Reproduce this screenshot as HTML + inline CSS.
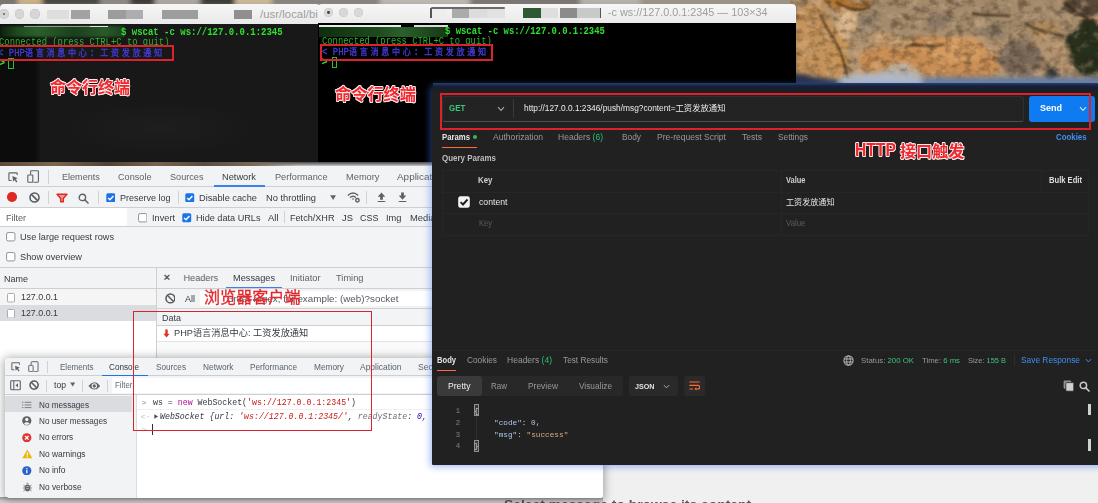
<!DOCTYPE html>
<html lang="zh"><head><meta charset="utf-8"><title>WebSocket push demo</title>
<style>
html,body{margin:0;padding:0;background:#a88a68;}
#p{position:relative;width:1098px;height:503px;overflow:hidden;background:#a88a68;}
#p>div,#p>span,#p>svg{position:absolute;}
.t{white-space:pre;transform-origin:0 50%;display:block;}
</style></head>
<body><div id="p">
<svg style="left:0;top:0" width="1098" height="503" viewBox="0 0 1098 503">
<defs>
<filter id="rk" x="-5%" y="-20%" width="110%" height="140%" color-interpolation-filters="sRGB">
<feGaussianBlur stdDeviation="2.2" result="b"/>
<feTurbulence type="fractalNoise" baseFrequency="0.045 0.06" numOctaves="3" seed="11" result="n"/>
<feDisplacementMap in="b" in2="n" scale="16" xChannelSelector="R" yChannelSelector="G"/>
</filter>
<filter id="bs" x="-10%" y="-10%" width="120%" height="120%"><feGaussianBlur stdDeviation=".9"/></filter>
<filter id="bt" x="-10%" y="-60%" width="120%" height="220%"><feGaussianBlur stdDeviation="2.4"/></filter>
<filter id="nzd" x="0" y="0" width="100%" height="100%" color-interpolation-filters="sRGB"><feTurbulence type="fractalNoise" baseFrequency="0.11 0.14" numOctaves="4" seed="3"/><feColorMatrix type="matrix" values="0 0 0 0 0.16  0 0 0 0 0.1  0 0 0 0 0.05  1.9 1.6 0 0 -1.55"/></filter>
<filter id="nzl" x="0" y="0" width="100%" height="100%" color-interpolation-filters="sRGB"><feTurbulence type="fractalNoise" baseFrequency="0.08 0.1" numOctaves="3" seed="21"/><feColorMatrix type="matrix" values="0 0 0 0 0.95  0 0 0 0 0.82  0 0 0 0 0.66  0 1.8 1.6 0 -1.75"/></filter>
<clipPath id="wc"><rect x="790" y="0" width="308" height="92"/></clipPath>
</defs>
<rect width="1098" height="170" fill="#ae8f6c"/>
<g filter="url(#bt)">
<rect x="-10" y="-6" width="30" height="12" fill="#77736e"/>
<rect x="18" y="-6" width="25" height="12" fill="#c9b08a"/>
<rect x="42" y="-6" width="60" height="12" fill="#474645"/>
<rect x="100" y="-6" width="32" height="12" fill="#8a8886"/>
<rect x="130" y="-6" width="26" height="12" fill="#3c3b3a"/>
<rect x="155" y="-6" width="48" height="12" fill="#a8a6a3"/>
<rect x="200" y="-6" width="36" height="12" fill="#3b3a39"/>
<rect x="235" y="-6" width="38" height="12" fill="#c8b89a"/>
<rect x="272" y="-6" width="110" height="12" fill="#858380"/>
<rect x="380" y="-6" width="92" height="12" fill="#b9b7b4"/>
<rect x="470" y="-6" width="112" height="12" fill="#787673"/>
<rect x="580" y="-6" width="62" height="12" fill="#b4b2ae"/>
<rect x="640" y="-6" width="160" height="12" fill="#9a9389"/>
</g>
<g clip-path="url(#wc)">
<g filter="url(#rk)">
<rect x="780" y="-10" width="330" height="110" fill="#b49470"/>
<rect x="856" y="-10" width="220" height="48" fill="#a48b6c"/>
<ellipse cx="812" cy="44" rx="22" ry="44" fill="#c4935c"/>
<ellipse cx="846" cy="3" rx="22" ry="7" fill="#b27430"/>
<ellipse cx="846" cy="24" rx="9" ry="20" fill="#dbb68d" transform="rotate(16 846 24)"/>
<ellipse cx="838" cy="58" rx="10" ry="22" fill="#c89557"/>
<ellipse cx="930" cy="62" rx="72" ry="24" fill="#c98e55"/>
<ellipse cx="955" cy="52" rx="30" ry="12" fill="#d39a5f"/>
<ellipse cx="893" cy="40" rx="22" ry="6" fill="#caa070"/>
<ellipse cx="870" cy="22" rx="10" ry="8" fill="#8f7d68"/>
<ellipse cx="940" cy="20" rx="14" ry="9" fill="#8a7763"/>
<ellipse cx="990" cy="30" rx="16" ry="8" fill="#8c7963"/>
<ellipse cx="1021" cy="58" rx="21" ry="19" fill="#7b6a5a"/>
<ellipse cx="1044" cy="30" rx="14" ry="8" fill="#b08a5c"/>
<ellipse cx="1052" cy="72" rx="7" ry="9" fill="#33312f"/>
<ellipse cx="1090" cy="50" rx="22" ry="29" fill="#27301d"/>
<ellipse cx="1085" cy="6" rx="20" ry="11" fill="#57483a"/>
<ellipse cx="900" cy="74" rx="20" ry="9" fill="#b9ad9f"/>
</g>
<g filter="url(#bs)" fill="none" stroke="#33220f" stroke-width="1.9" opacity=".9">
<path d="M820 14 C826 30 838 42 842 56 S846 70 848 80"/>
<path d="M836 2 C846 9 858 12 870 7"/>
<path d="M972 13 C985 17 998 14 1010 16"/>
<path d="M1025 24 C1040 31 1052 34 1064 36"/>
<path d="M905 47 C918 41 932 50 944 44"/>
<path d="M1064 2 C1074 12 1084 18 1096 22"/>
</g>
<rect x="790" y="0" width="308" height="92" filter="url(#nzd)" opacity=".38"/>
<rect x="790" y="0" width="308" height="92" filter="url(#nzl)" opacity=".4"/>
<g filter="url(#bt)">
<path d="M780 70 L800 74 L842 82 L842 95 L780 95Z" fill="#27324d"/>
<ellipse cx="884" cy="81" rx="46" ry="8" fill="#b1b9c6"/>
<rect x="922" y="77" width="190" height="16" fill="#6d809d"/>
</g>
</g>
<rect x="0" y="158" width="330" height="10" fill="#7a6a58"/>
</svg>
<div style="left:0px;top:4px;width:320px;height:20.5px;background:linear-gradient(#f6f6f6,#e9e9e9);border-radius:4px 4px 0 0;"></div>
<div style="left:0px;top:24px;width:320px;height:137.5px;background:#181818;"></div>
<div style="left:0px;top:24px;width:41px;height:137.5px;background:linear-gradient(90deg,#0c0c0c 85%,#181818);"></div>
<div style="left:60px;top:100px;width:200px;height:56px;background:radial-gradient(closest-side,#1e1e1e,#181818);"></div>
<div style="left:-0.7000000000000002px;top:9.3px;width:9.4px;height:9.4px;background:#d6d6d6;border-radius:50%;box-shadow:inset 0 0 0 .5px #c6c6c6;"></div>
<div style="left:14.8px;top:9.3px;width:9.4px;height:9.4px;background:#d6d6d6;border-radius:50%;box-shadow:inset 0 0 0 .5px #c6c6c6;"></div>
<div style="left:30.3px;top:9.3px;width:9.4px;height:9.4px;background:#d6d6d6;border-radius:50%;box-shadow:inset 0 0 0 .5px #c6c6c6;"></div>
<div style="left:2.6px;top:12.6px;width:2.8px;height:2.8px;background:#5f5f5f;border-radius:50%;"></div>
<div style="left:47px;top:9.5px;width:22px;height:9.5px;background:#dedede;filter:blur(.5px);"></div>
<div style="left:71px;top:9.5px;width:19px;height:9.5px;background:#a2a2a2;filter:blur(.5px);"></div>
<div style="left:108px;top:9.5px;width:18px;height:9.5px;background:#9c9c9c;filter:blur(.5px);"></div>
<div style="left:126px;top:9.5px;width:17px;height:9.5px;background:#adadad;filter:blur(.5px);"></div>
<div style="left:162px;top:9.5px;width:36px;height:9.5px;background:#9d9d9d;filter:blur(.5px);"></div>
<div style="left:234px;top:9.5px;width:18px;height:9.5px;background:#8f8f8f;filter:blur(.5px);"></div>
<span class="t" id="t1" style="left:260px;top:7px;font-size:11.2px;line-height:14.6px;color:#9d9d9d;font-family:'Liberation Sans','Noto Sans CJK SC',sans-serif;letter-spacing:.1px;">/usr/local/bin</span>
<div style="left:0px;top:26.4px;width:124px;height:11px;background:linear-gradient(90deg,#0c1f0c,#1f4a1f 14%,#2b602b 30%,#1b401b 60%,#2a5a2a 85%,#1c401c);filter:blur(.8px);"></div>
<div style="left:24px;top:25.6px;width:66px;height:1.8px;background:#8f998f;filter:blur(.7px);"></div>
<div style="left:90px;top:25.6px;width:18px;height:1.8px;background:#e0e6e0;filter:blur(.7px);"></div>
<span class="t" id="t2" style="left:121.4px;top:26px;font-size:10px;line-height:13.0px;color:#2fe02f;font-family:'Liberation Mono','Noto Sans CJK SC',monospace;font-weight:700;transform:scaleX(0.8976);">$ wscat -c ws://127.0.0.1:2345</span>
<span class="t" id="t3" style="left:-1.5px;top:36px;font-size:10px;line-height:13.0px;color:#25b825;font-family:'Liberation Mono','Noto Sans CJK SC',monospace;transform:scaleX(0.8879);">Connected (press CTRL+C to quit)</span>
<span class="t" id="t4" style="left:-1.6px;top:47px;font-size:10px;line-height:13.0px;color:#443cd8;font-family:'Liberation Mono','Noto Sans CJK SC',monospace;-webkit-text-stroke:.3px #443cd8;transform:scaleX(0.8965);">&lt; PHP<span style="font-size:9px;letter-spacing:3px">语言消息中心</span>: <span style="font-size:9px;letter-spacing:3px">工资发放通知</span></span>
<span class="t" id="t5" style="left:-1px;top:57px;font-size:10px;line-height:13.0px;color:#2fe02f;font-family:'Liberation Mono','Noto Sans CJK SC',monospace;font-weight:700;">&gt;</span>
<div style="left:8.2px;top:58px;width:5.6px;height:11px;background:transparent;border:1.1px solid #27c227;box-sizing:border-box;"></div>
<div style="left:318px;top:4px;width:477.5px;height:19px;background:linear-gradient(#f7f7f7,#eaeaea);border-radius:4px 4px 0 0;"></div>
<div style="left:318px;top:22.8px;width:477.5px;height:150px;background:#000;"></div>
<div style="left:323.7px;top:7.8px;width:9.2px;height:9.2px;background:#d8d8d8;border-radius:50%;box-shadow:inset 0 0 0 .5px #c8c8c8;"></div>
<div style="left:338.79999999999995px;top:7.8px;width:9.2px;height:9.2px;background:#d8d8d8;border-radius:50%;box-shadow:inset 0 0 0 .5px #c8c8c8;"></div>
<div style="left:354.09999999999997px;top:7.8px;width:9.2px;height:9.2px;background:#d8d8d8;border-radius:50%;box-shadow:inset 0 0 0 .5px #c8c8c8;"></div>
<div style="left:326.9px;top:11px;width:2.8px;height:2.8px;background:#444;border-radius:50%;"></div>
<div style="left:431px;top:8px;width:16px;height:9.5px;background:#eeeeee;filter:blur(.5px);"></div>
<div style="left:452px;top:8px;width:17px;height:9.5px;background:#ababab;filter:blur(.5px);"></div>
<div style="left:469px;top:8px;width:18px;height:9.5px;background:#dcdcdc;filter:blur(.5px);"></div>
<div style="left:523px;top:8px;width:18px;height:9.5px;background:#2f5a31;filter:blur(.5px);"></div>
<div style="left:541px;top:8px;width:17px;height:9.5px;background:#dedede;filter:blur(.5px);"></div>
<div style="left:560px;top:8px;width:17px;height:9.5px;background:#8b8b8b;filter:blur(.5px);"></div>
<div style="left:577px;top:8px;width:23px;height:9.5px;background:#c9c9c9;filter:blur(.5px);"></div>
<div style="left:430px;top:8px;width:1.6px;height:9.5px;background:#555;filter:blur(.5px);"></div>
<div style="left:431px;top:7.4px;width:74px;height:1.3px;background:#6a6a6a;filter:blur(.5px);border-radius:2px;"></div>
<div style="left:487px;top:8.6px;width:18px;height:9px;background:#e2e2e2;filter:blur(.5px);"></div>
<div style="left:599.5px;top:8px;width:1.6px;height:9.5px;background:#555;filter:blur(.5px);"></div>
<span class="t" id="t6" style="left:607.5px;top:5px;font-size:10.8px;line-height:14.0px;color:#9d9d9d;font-family:'Liberation Sans','Noto Sans CJK SC',sans-serif;transform:scaleX(1.0008);">-c ws://127.0.0.1:2345 — 103×34</span>
<div style="left:319px;top:27px;width:129px;height:9.5px;background:linear-gradient(90deg,#0f2d0f,#1d4a1d 45%,#2c5f2c 64%,#153815);filter:blur(.7px);"></div>
<div style="left:319px;top:25.4px;width:82px;height:2px;background:#e8ece8;filter:blur(.5px);"></div>
<div style="left:414px;top:25.4px;width:34px;height:2px;background:#d8dcd8;filter:blur(.5px);"></div>
<span class="t" id="t7" style="left:445.2px;top:25px;font-size:10px;line-height:13.0px;color:#2fe02f;font-family:'Liberation Mono','Noto Sans CJK SC',monospace;font-weight:700;transform:scaleX(0.8876);">$ wscat -c ws://127.0.0.1:2345</span>
<span class="t" id="t8" style="left:321.7px;top:35px;font-size:10px;line-height:13.0px;color:#25b825;font-family:'Liberation Mono','Noto Sans CJK SC',monospace;transform:scaleX(0.8842);">Connected (press CTRL+C to quit)</span>
<span class="t" id="t9" style="left:321.5px;top:46px;font-size:10px;line-height:13.0px;color:#443cd8;font-family:'Liberation Mono','Noto Sans CJK SC',monospace;-webkit-text-stroke:.3px #443cd8;transform:scaleX(0.8965);">&lt; PHP<span style="font-size:9px;letter-spacing:3px">语言消息中心</span>: <span style="font-size:9px;letter-spacing:3px">工资发放通知</span></span>
<span class="t" id="t10" style="left:321.5px;top:56px;font-size:10px;line-height:13.0px;color:#2fe02f;font-family:'Liberation Mono','Noto Sans CJK SC',monospace;font-weight:700;">&gt;</span>
<div style="left:331.8px;top:56.6px;width:5.6px;height:11px;background:transparent;border:1.1px solid #27c227;box-sizing:border-box;"></div>
<div style="left:0px;top:161.5px;width:1098px;height:4.5px;background:linear-gradient(#4b4b4b,#8a8a8a 55%,#c9c9c9);"></div>
<div style="left:0px;top:161.5px;width:300px;height:4px;background:linear-gradient(90deg,#5e4a38,#7b6650 18%,#4f4236 36%,#77644f 52%,#5a4c3f 68%,#77685a 84%,rgba(110,105,100,0));"></div>
<div style="left:0px;top:165.5px;width:1098px;height:340px;background:#ffffff;"></div>
<div style="left:0px;top:165.5px;width:1098px;height:21.5px;background:#f1f3f4;border-bottom:1px solid #cdcfd3;box-sizing:border-box;"></div>
<div style="left:0px;top:187px;width:1098px;height:20.5px;background:#f1f3f4;border-bottom:1px solid #cdcfd3;box-sizing:border-box;"></div>
<div style="left:0px;top:207.5px;width:1098px;height:19px;background:#f1f3f4;border-bottom:1px solid #cdcfd3;box-sizing:border-box;"></div>
<div style="left:0px;top:226.5px;width:1098px;height:41.5px;background:#f3f4f5;border-bottom:1px solid #cdcfd3;box-sizing:border-box;"></div>
<svg style="left:7.5px;top:171.5px;" width="10.0" height="11.0" viewBox="0 0 10 11"><path d="M9.2 3V1.5Q9.2 .9 8.6 .9H1.5Q.9 .9 .9 1.5V7.9Q.9 8.5 1.5 8.5H3.6" fill="none" stroke="#5f6368" stroke-width="1.1"/><path d="M4.4 4L9.8 6.2L7.6 7.1L9.4 9.6L8.3 10.4L6.6 7.9L5.1 9.4Z" fill="#5f6368"/></svg>
<svg style="left:27px;top:170.2px;" width="12.0" height="13.0" viewBox="0 0 12 13"><path d="M3.6 4.4V1.4Q3.6 .8 4.2 .8H10.8Q11.4 .8 11.4 1.4V11.6Q11.4 12.2 10.8 12.2H6.4" fill="none" stroke="#5f6368" stroke-width="1.1"/><rect x=".8" y="5" width="5" height="7.2" rx=".7" fill="none" stroke="#5f6368" stroke-width="1.1"/></svg>
<div style="left:48px;top:170px;width:1px;height:13.5px;background:#d0d2d5;"></div>
<span class="t" id="t11" style="left:61.6px;top:172px;font-size:9.15px;line-height:11.9px;color:#5f6368;font-family:'Liberation Sans','Noto Sans CJK SC',sans-serif;transform:scaleX(0.9935);">Elements</span>
<span class="t" id="t12" style="left:117.5px;top:172px;font-size:9.15px;line-height:11.9px;color:#5f6368;font-family:'Liberation Sans','Noto Sans CJK SC',sans-serif;transform:scaleX(1.0005);">Console</span>
<span class="t" id="t13" style="left:169.5px;top:172px;font-size:9.15px;line-height:11.9px;color:#5f6368;font-family:'Liberation Sans','Noto Sans CJK SC',sans-serif;transform:scaleX(1.0005);">Sources</span>
<span class="t" id="t14" style="left:222px;top:172px;font-size:9.15px;line-height:11.9px;color:#363a40;font-family:'Liberation Sans','Noto Sans CJK SC',sans-serif;transform:scaleX(1.0159);">Network</span>
<span class="t" id="t15" style="left:274.5px;top:172px;font-size:9.15px;line-height:11.9px;color:#5f6368;font-family:'Liberation Sans','Noto Sans CJK SC',sans-serif;transform:scaleX(1.0048);">Performance</span>
<span class="t" id="t16" style="left:345.5px;top:172px;font-size:9.15px;line-height:11.9px;color:#5f6368;font-family:'Liberation Sans','Noto Sans CJK SC',sans-serif;transform:scaleX(1.0161);">Memory</span>
<span class="t" id="t17" style="left:397px;top:172px;font-size:9.15px;line-height:11.9px;color:#5f6368;font-family:'Liberation Sans','Noto Sans CJK SC',sans-serif;transform:scaleX(1.0865);">Application</span>
<div style="left:214px;top:185.4px;width:51px;height:1.7px;background:#3b80ee;"></div>
<div style="left:7.3px;top:192.4px;width:9.5px;height:9.5px;background:#de2a22;border-radius:50%;"></div>
<svg style="left:28.5px;top:191.7px;" width="11.0" height="11.0" viewBox="0 0 11.0 11.0"><circle cx="5.5" cy="5.5" r="4.5" fill="none" stroke="#565b61" stroke-width="1.55"/><path d="M2.35 2.35L8.65 8.65" stroke="#565b61" stroke-width="1.55"/></svg>
<div style="left:47.5px;top:191px;width:1px;height:13px;background:#d0d2d5;"></div>
<svg style="left:56px;top:192.6px;" width="12" height="10.5" viewBox="0 0 12 10.5"><path d="M1.1 1.3H10.9L7.3 5.4V8.8H4.7V5.4Z" fill="#f4a19c" stroke="#dc2c26" stroke-width="1.5" stroke-linejoin="round"/></svg>
<svg style="left:78px;top:192.5px;" width="11" height="11" viewBox="0 0 11 11"><circle cx="4.4" cy="4.4" r="3.2" fill="none" stroke="#5f6368" stroke-width="1.4"/><path d="M6.8 6.8L10 10" stroke="#5f6368" stroke-width="1.5999999999999999" stroke-linecap="round"/></svg>
<div style="left:97.5px;top:191px;width:1px;height:13px;background:#d0d2d5;"></div>
<svg style="left:105.5px;top:192.5px;" width="9.5" height="9.5" viewBox="0 0 10 10"><rect x=".3" y=".3" width="9.4" height="9.4" rx="1.6" fill="#1a73e8"/><path d="M2.3 5.2L4.2 7.1L7.8 3.1" fill="none" stroke="#fff" stroke-width="1.5"/></svg>
<span class="t" id="t18" style="left:119.5px;top:193px;font-size:9.15px;line-height:11.9px;color:#363a40;font-family:'Liberation Sans','Noto Sans CJK SC',sans-serif;transform:scaleX(0.9857);">Preserve log</span>
<div style="left:177.5px;top:191px;width:1px;height:13px;background:#d0d2d5;"></div>
<svg style="left:185px;top:192.5px;" width="9.5" height="9.5" viewBox="0 0 10 10"><rect x=".3" y=".3" width="9.4" height="9.4" rx="1.6" fill="#1a73e8"/><path d="M2.3 5.2L4.2 7.1L7.8 3.1" fill="none" stroke="#fff" stroke-width="1.5"/></svg>
<span class="t" id="t19" style="left:199px;top:193px;font-size:9.15px;line-height:11.9px;color:#363a40;font-family:'Liberation Sans','Noto Sans CJK SC',sans-serif;transform:scaleX(1.0117);">Disable cache</span>
<span class="t" id="t20" style="left:266px;top:193px;font-size:9.15px;line-height:11.9px;color:#363a40;font-family:'Liberation Sans','Noto Sans CJK SC',sans-serif;transform:scaleX(1.0162);">No throttling</span>
<svg style="left:330.3px;top:194.6px;" width="6.2" height="5.2" viewBox="0 0 6.2 5.2"><path d="M.2 .3H6L3.1 5Z" fill="#5f6368"/></svg>
<svg style="left:346.8px;top:191px;" width="13.4" height="12" viewBox="0 0 13.4 12"><path d="M.8 4.4Q6 -.4 11.2 4.4" fill="none" stroke="#5f6368" stroke-width="1.4"/><path d="M3 6.5Q6 3.8 9 6.5" fill="none" stroke="#5f6368" stroke-width="1.4"/><path d="M4.6 7.4H7.4L6 9Z" fill="#5f6368"/><circle cx="10.4" cy="9.2" r="1.7" fill="#f1f3f4" stroke="#5f6368" stroke-width="1.5"/></svg>
<div style="left:366px;top:191px;width:1px;height:13px;background:#d0d2d5;"></div>
<svg style="left:376.5px;top:192px;" width="9" height="11" viewBox="0 0 9 11"><path d="M4.5 .4L8.3 4.8H5.9V7.7H3.1V4.8H.7Z" fill="#5f6368"/><rect x=".7" y="9" width="7.6" height="1" fill="#5f6368"/></svg>
<svg style="left:397.9px;top:192px;" width="9" height="11" viewBox="0 0 9 11"><path d="M4.5 7.8L8.3 3.4H5.9V.4H3.1V3.4H.7Z" fill="#5f6368"/><rect x=".7" y="9" width="7.6" height="1" fill="#5f6368"/></svg>
<div style="left:0px;top:208px;width:127px;height:17.5px;background:#ffffff;"></div>
<span class="t" id="t21" style="left:5.5px;top:213px;font-size:9.15px;line-height:11.9px;color:#5a5e63;font-family:'Liberation Sans','Noto Sans CJK SC',sans-serif;transform:scaleX(0.9861);">Filter</span>
<svg style="left:137.5px;top:213px;" width="9.5" height="9.5" viewBox="0 0 10 10"><rect x=".6" y=".6" width="8.8" height="8.8" rx="1.6" fill="#fff" stroke="#8a8d91" stroke-width="1"/></svg>
<span class="t" id="t22" style="left:151.5px;top:213px;font-size:9.15px;line-height:11.9px;color:#363a40;font-family:'Liberation Sans','Noto Sans CJK SC',sans-serif;transform:scaleX(1.0075);">Invert</span>
<svg style="left:182px;top:213px;" width="9.5" height="9.5" viewBox="0 0 10 10"><rect x=".3" y=".3" width="9.4" height="9.4" rx="1.6" fill="#1a73e8"/><path d="M2.3 5.2L4.2 7.1L7.8 3.1" fill="none" stroke="#fff" stroke-width="1.5"/></svg>
<span class="t" id="t23" style="left:196px;top:213px;font-size:9.15px;line-height:11.9px;color:#363a40;font-family:'Liberation Sans','Noto Sans CJK SC',sans-serif;transform:scaleX(1.0012);">Hide data URLs</span>
<span class="t" id="t24" style="left:267.5px;top:213px;font-size:9.15px;line-height:11.9px;color:#363a40;font-family:'Liberation Sans','Noto Sans CJK SC',sans-serif;transform:scaleX(1.0338);">All</span>
<div style="left:283.5px;top:211px;width:1px;height:12px;background:#d0d2d5;"></div>
<span class="t" id="t25" style="left:289.5px;top:213px;font-size:9.15px;line-height:11.9px;color:#363a40;font-family:'Liberation Sans','Noto Sans CJK SC',sans-serif;transform:scaleX(0.9972);">Fetch/XHR</span>
<span class="t" id="t26" style="left:341.5px;top:213px;font-size:9.15px;line-height:11.9px;color:#363a40;font-family:'Liberation Sans','Noto Sans CJK SC',sans-serif;transform:scaleX(1.0323);">JS</span>
<span class="t" id="t27" style="left:360px;top:213px;font-size:9.15px;line-height:11.9px;color:#363a40;font-family:'Liberation Sans','Noto Sans CJK SC',sans-serif;transform:scaleX(0.9858);">CSS</span>
<span class="t" id="t28" style="left:386px;top:213px;font-size:9.15px;line-height:11.9px;color:#363a40;font-family:'Liberation Sans','Noto Sans CJK SC',sans-serif;transform:scaleX(1.0185);">Img</span>
<span class="t" id="t29" style="left:409.5px;top:213px;font-size:9.15px;line-height:11.9px;color:#363a40;font-family:'Liberation Sans','Noto Sans CJK SC',sans-serif;transform:scaleX(1.0258);">Media</span>
<svg style="left:6px;top:232.3px;" width="9.5" height="9.5" viewBox="0 0 10 10"><rect x=".6" y=".6" width="8.8" height="8.8" rx="1.6" fill="#fff" stroke="#8a8d91" stroke-width="1"/></svg>
<span class="t" id="t30" style="left:20px;top:232px;font-size:9.15px;line-height:11.9px;color:#363a40;font-family:'Liberation Sans','Noto Sans CJK SC',sans-serif;transform:scaleX(1.0018);">Use large request rows</span>
<svg style="left:6px;top:252.3px;" width="9.5" height="9.5" viewBox="0 0 10 10"><rect x=".6" y=".6" width="8.8" height="8.8" rx="1.6" fill="#fff" stroke="#8a8d91" stroke-width="1"/></svg>
<span class="t" id="t31" style="left:20px;top:252px;font-size:9.15px;line-height:11.9px;color:#363a40;font-family:'Liberation Sans','Noto Sans CJK SC',sans-serif;transform:scaleX(1.0102);">Show overview</span>
<div style="left:0px;top:268px;width:156px;height:20.5px;background:#f1f3f4;border-bottom:1px solid #cdcfd3;box-sizing:border-box;"></div>
<span class="t" id="t32" style="left:4px;top:274px;font-size:9.15px;line-height:11.9px;color:#363a40;font-family:'Liberation Sans','Noto Sans CJK SC',sans-serif;transform:scaleX(0.9859);">Name</span>
<div style="left:0px;top:288.5px;width:156px;height:16.5px;background:#f5f5f5;"></div>
<div style="left:0px;top:305px;width:156px;height:15.5px;background:#dadce0;"></div>
<div style="left:156px;top:268px;width:1px;height:240px;background:#cdcfd3;"></div>
<svg style="left:7px;top:293px;" width="8" height="9.5" viewBox="0 0 8 9.5"><rect x=".5" y=".5" width="7" height="8.5" rx="1" fill="#fff" stroke="#a9adb2" stroke-width="1"/></svg>
<svg style="left:7px;top:308.5px;" width="8" height="9.5" viewBox="0 0 8 9.5"><rect x=".5" y=".5" width="7" height="8.5" rx="1" fill="#fff" stroke="#a9adb2" stroke-width="1"/></svg>
<span class="t" id="t33" style="left:20.5px;top:292px;font-size:9.15px;line-height:11.9px;color:#363a40;font-family:'Liberation Sans','Noto Sans CJK SC',sans-serif;transform:scaleX(0.9721);">127.0.0.1</span>
<span class="t" id="t34" style="left:20.5px;top:308px;font-size:9.15px;line-height:11.9px;color:#363a40;font-family:'Liberation Sans','Noto Sans CJK SC',sans-serif;transform:scaleX(0.9721);">127.0.0.1</span>
<div style="left:157px;top:268px;width:941px;height:20.5px;background:#f1f3f4;border-bottom:1px solid #cdcfd3;box-sizing:border-box;"></div>
<span class="t" id="t35" style="left:163.6px;top:270px;font-size:11.5px;line-height:15.0px;color:#50545a;font-family:'Liberation Sans','Noto Sans CJK SC',sans-serif;font-weight:700;">×</span>
<span class="t" id="t36" style="left:183.5px;top:273px;font-size:9.15px;line-height:11.9px;color:#5f6368;font-family:'Liberation Sans','Noto Sans CJK SC',sans-serif;transform:scaleX(1.0000);">Headers</span>
<span class="t" id="t37" style="left:233px;top:273px;font-size:9.15px;line-height:11.9px;color:#363a40;font-family:'Liberation Sans','Noto Sans CJK SC',sans-serif;transform:scaleX(1.0098);">Messages</span>
<span class="t" id="t38" style="left:289.5px;top:273px;font-size:9.15px;line-height:11.9px;color:#5f6368;font-family:'Liberation Sans','Noto Sans CJK SC',sans-serif;transform:scaleX(1.0188);">Initiator</span>
<span class="t" id="t39" style="left:335.5px;top:273px;font-size:9.15px;line-height:11.9px;color:#5f6368;font-family:'Liberation Sans','Noto Sans CJK SC',sans-serif;transform:scaleX(1.0168);">Timing</span>
<div style="left:226px;top:286.6px;width:56px;height:1.7px;background:#3b80ee;"></div>
<div style="left:157px;top:288.5px;width:941px;height:20px;background:#f1f3f4;border-bottom:1px solid #cdcfd3;box-sizing:border-box;"></div>
<svg style="left:164.6px;top:292.8px;" width="10.8" height="10.8" viewBox="0 0 10.8 10.8"><circle cx="5.4" cy="5.4" r="4.4" fill="none" stroke="#565b61" stroke-width="1.55"/><path d="M2.3200000000000003 2.3200000000000003L8.48 8.48" stroke="#565b61" stroke-width="1.55"/></svg>
<span class="t" id="t40" style="left:185px;top:294px;font-size:9.15px;line-height:11.9px;color:#363a40;font-family:'Liberation Sans','Noto Sans CJK SC',sans-serif;transform:scaleX(0.9846);">All</span>
<div style="left:200px;top:291.4px;width:898px;height:14.2px;background:#ffffff;"></div>
<span class="t" id="t41" style="left:227.2px;top:294px;font-size:9.15px;line-height:11.9px;color:#54585e;font-family:'Liberation Sans','Noto Sans CJK SC',sans-serif;transform:scaleX(1.0762);">Enter regex, for example: (web)?socket</span>
<div style="left:157px;top:308.5px;width:941px;height:17px;background:#f3f4f5;border-bottom:1px solid #cdcfd3;box-sizing:border-box;"></div>
<span class="t" id="t42" style="left:161.5px;top:313px;font-size:9.15px;line-height:11.9px;color:#363a40;font-family:'Liberation Sans','Noto Sans CJK SC',sans-serif;transform:scaleX(0.9854);">Data</span>
<div style="left:157px;top:325.5px;width:941px;height:16px;background:#ffffff;border-bottom:1px solid #e3e4e6;box-sizing:border-box;"></div>
<svg style="left:162.5px;top:328.5px;" width="7" height="9" viewBox="0 0 7 9"><path d="M3.5 8.6L.4 4.8H2.3V.5H4.7V4.8H6.6Z" fill="#d9302a"/></svg>
<span class="t" id="t43" style="left:173.5px;top:328px;font-size:9.15px;line-height:11.9px;color:#363a40;font-family:'Liberation Sans','Noto Sans CJK SC',sans-serif;transform:scaleX(1.0064);">PHP语言消息中心: 工资发放通知</span>
<div style="left:157px;top:341.5px;width:941px;height:170px;background:#f0f0f0;"></div>
<div style="left:157px;top:341.5px;width:446px;height:170px;background:#fafafa;"></div>
<div style="left:0px;top:497px;width:603px;height:8px;background:linear-gradient(#9a9a9a,#cfcfcf 50%,#d6d6d6);"></div>
<span class="t" id="t44" style="left:504px;top:496px;font-size:13.6px;line-height:17.7px;color:#555;font-family:'Liberation Sans','Noto Sans CJK SC',sans-serif;font-weight:700;transform:scaleX(1.0186);">Select message to browse its content</span>
<div style="left:5px;top:358px;width:598px;height:140px;background:#ffffff;border-radius:4px 4px 2px 5px;box-shadow:0 1px 9px 2px rgba(0,0,0,.3);"></div>
<div style="left:5px;top:358px;width:598px;height:18px;background:#f1f3f4;border-bottom:1px solid #cdcfd3;box-sizing:border-box;border-radius:4px 4px 0 0;"></div>
<div style="left:5px;top:376px;width:598px;height:18.5px;background:#f1f3f4;border-bottom:1px solid #cdcfd3;box-sizing:border-box;"></div>
<svg style="left:10.5px;top:361.8px;" width="9.2" height="10.1" viewBox="0 0 10 11"><path d="M9.2 3V1.5Q9.2 .9 8.6 .9H1.5Q.9 .9 .9 1.5V7.9Q.9 8.5 1.5 8.5H3.6" fill="none" stroke="#5f6368" stroke-width="1.1"/><path d="M4.4 4L9.8 6.2L7.6 7.1L9.4 9.6L8.3 10.4L6.6 7.9L5.1 9.4Z" fill="#5f6368"/></svg>
<svg style="left:28.3px;top:360.6px;" width="10.6" height="11.4" viewBox="0 0 12 13"><path d="M3.6 4.4V1.4Q3.6 .8 4.2 .8H10.8Q11.4 .8 11.4 1.4V11.6Q11.4 12.2 10.8 12.2H6.4" fill="none" stroke="#5f6368" stroke-width="1.1"/><rect x=".8" y="5" width="5" height="7.2" rx=".7" fill="none" stroke="#5f6368" stroke-width="1.1"/></svg>
<div style="left:46.5px;top:361px;width:1px;height:12px;background:#d0d2d5;"></div>
<span class="t" id="t45" style="left:59.5px;top:362px;font-size:8.35px;line-height:10.9px;color:#5f6368;font-family:'Liberation Sans','Noto Sans CJK SC',sans-serif;transform:scaleX(0.9632);">Elements</span>
<span class="t" id="t46" style="left:109px;top:362px;font-size:8.35px;line-height:10.9px;color:#363a40;font-family:'Liberation Sans','Noto Sans CJK SC',sans-serif;transform:scaleX(0.9796);">Console</span>
<span class="t" id="t47" style="left:156px;top:362px;font-size:8.35px;line-height:10.9px;color:#5f6368;font-family:'Liberation Sans','Noto Sans CJK SC',sans-serif;transform:scaleX(0.9801);">Sources</span>
<span class="t" id="t48" style="left:203px;top:362px;font-size:8.35px;line-height:10.9px;color:#5f6368;font-family:'Liberation Sans','Noto Sans CJK SC',sans-serif;transform:scaleX(0.9964);">Network</span>
<span class="t" id="t49" style="left:250px;top:362px;font-size:8.35px;line-height:10.9px;color:#5f6368;font-family:'Liberation Sans','Noto Sans CJK SC',sans-serif;transform:scaleX(0.9840);">Performance</span>
<span class="t" id="t50" style="left:314px;top:362px;font-size:8.35px;line-height:10.9px;color:#5f6368;font-family:'Liberation Sans','Noto Sans CJK SC',sans-serif;transform:scaleX(0.9953);">Memory</span>
<span class="t" id="t51" style="left:360px;top:362px;font-size:8.35px;line-height:10.9px;color:#5f6368;font-family:'Liberation Sans','Noto Sans CJK SC',sans-serif;transform:scaleX(1.0165);">Application</span>
<span class="t" id="t52" style="left:418px;top:362px;font-size:8.35px;line-height:10.9px;color:#5f6368;font-family:'Liberation Sans','Noto Sans CJK SC',sans-serif;transform:scaleX(1.0285);">Security</span>
<div style="left:102px;top:374.5px;width:46px;height:1.6px;background:#1a73e8;"></div>
<svg style="left:10px;top:380.2px;" width="11" height="10.5" viewBox="0 0 11 10.5"><rect x=".7" y=".7" width="9.6" height="9.1" rx=".8" fill="none" stroke="#5f6368" stroke-width="1.1"/><path d="M3.8 .7V9.8" stroke="#5f6368" stroke-width="1.1"/><path d="M8 3.2V7.4L5.6 5.3Z" fill="#5f6368"/></svg>
<svg style="left:29.4px;top:380.4px;" width="10.2" height="10.2" viewBox="0 0 10.2 10.2"><circle cx="5.1" cy="5.1" r="4.1" fill="none" stroke="#565b61" stroke-width="1.55"/><path d="M2.23 2.23L7.969999999999999 7.969999999999999" stroke="#565b61" stroke-width="1.55"/></svg>
<div style="left:46px;top:379.5px;width:1px;height:12px;background:#d0d2d5;"></div>
<span class="t" id="t53" style="left:53.5px;top:380px;font-size:8.35px;line-height:10.9px;color:#363a40;font-family:'Liberation Sans','Noto Sans CJK SC',sans-serif;transform:scaleX(1.0336);">top</span>
<svg style="left:69.6px;top:382.4px;" width="5.4" height="4.8" viewBox="0 0 5.4 4.8"><path d="M.2 .4H5.2L2.7 4.4Z" fill="#5f6368"/></svg>
<div style="left:82px;top:379.5px;width:1px;height:12px;background:#d0d2d5;"></div>
<svg style="left:87.6px;top:380.6px;" width="12.6" height="9.8" viewBox="0 0 12.6 9.8"><path d="M.4 4.9Q6.3 -2.4 12.2 4.9Q6.3 12.2 .4 4.9Z" fill="#5f6368"/><circle cx="6.3" cy="4.9" r="2.7" fill="#f1f3f4"/><circle cx="6.3" cy="4.9" r="1.6" fill="#5f6368"/></svg>
<div style="left:107px;top:379.5px;width:1px;height:12px;background:#d0d2d5;"></div>
<div style="left:112px;top:377.5px;width:491px;height:15.5px;background:#ffffff;"></div>
<span class="t" id="t54" style="left:114.5px;top:380px;font-size:8.35px;line-height:10.9px;color:#666a70;font-family:'Liberation Sans','Noto Sans CJK SC',sans-serif;transform:scaleX(0.9436);">Filter</span>
<div style="left:5px;top:394.5px;width:131px;height:103.5px;background:#f1f3f4;border-radius:0 0 0 5px;"></div>
<div style="left:136px;top:394.5px;width:1px;height:103.5px;background:#dcdde0;"></div>
<div style="left:5px;top:396.4px;width:126.5px;height:16px;background:#dadce0;"></div>
<svg style="left:22px;top:400.6px;" width="10" height="8" viewBox="0 0 10 8"><g fill="#84888d"><rect x="0" y=".8" width="1.4" height="1.1"/><rect x="2.6" y=".8" width="6.8" height="1.1"/><rect x="0" y="3.4" width="1.4" height="1.1"/><rect x="2.6" y="3.4" width="6.8" height="1.1"/><rect x="0" y="6" width="1.4" height="1.1"/><rect x="2.6" y="6" width="6.8" height="1.1"/></g></svg>
<span class="t" id="t55" style="left:39px;top:400px;font-size:8.35px;line-height:10.9px;color:#363a40;font-family:'Liberation Sans','Noto Sans CJK SC',sans-serif;transform:scaleX(0.9801);">No messages</span>
<svg style="left:22.3px;top:416.3px;" width="9.6" height="9.6" viewBox="0 0 9.6 9.6"><circle cx="4.8" cy="4.8" r="4.6" fill="#5f6368"/><circle cx="4.8" cy="3.5" r="1.65" fill="#f1f3f4"/><path d="M1.9 7.6Q4.8 4.9 7.7 7.6A3.9 3.9 0 0 1 1.9 7.6Z" fill="#f1f3f4"/></svg>
<span class="t" id="t56" style="left:39px;top:416px;font-size:8.35px;line-height:10.9px;color:#363a40;font-family:'Liberation Sans','Noto Sans CJK SC',sans-serif;transform:scaleX(0.9775);">No user messages</span>
<svg style="left:22.3px;top:432.8px;" width="9.6" height="9.6" viewBox="0 0 9.6 9.6"><circle cx="4.8" cy="4.8" r="4.6" fill="#e0352f"/><path d="M3 3L6.6 6.6M6.6 3L3 6.6" stroke="#fff" stroke-width="1.3"/></svg>
<span class="t" id="t57" style="left:39px;top:432px;font-size:8.35px;line-height:10.9px;color:#363a40;font-family:'Liberation Sans','Noto Sans CJK SC',sans-serif;transform:scaleX(0.9775);">No errors</span>
<svg style="left:21.8px;top:449px;" width="10.6" height="9.6" viewBox="0 0 10.6 9.6"><path d="M5.3 .4L10.3 9.2H.3Z" fill="#e9b60c"/><rect x="4.75" y="3.4" width="1.1" height="3.2" fill="#fff"/><rect x="4.75" y="7.2" width="1.1" height="1.1" fill="#fff"/></svg>
<span class="t" id="t58" style="left:39px;top:449px;font-size:8.35px;line-height:10.9px;color:#363a40;font-family:'Liberation Sans','Noto Sans CJK SC',sans-serif;transform:scaleX(1.0024);">No warnings</span>
<svg style="left:22.3px;top:465.8px;" width="9.6" height="9.6" viewBox="0 0 9.6 9.6"><circle cx="4.8" cy="4.8" r="4.6" fill="#2b62c9"/><rect x="4.2" y="4" width="1.2" height="3.4" fill="#fff"/><rect x="4.2" y="2.1" width="1.2" height="1.2" fill="#fff"/></svg>
<span class="t" id="t59" style="left:39px;top:465px;font-size:8.35px;line-height:10.9px;color:#363a40;font-family:'Liberation Sans','Noto Sans CJK SC',sans-serif;transform:scaleX(1.0024);">No info</span>
<svg style="left:22.6px;top:482px;" width="9" height="10" viewBox="0 0 9 10"><rect x="2" y="2.6" width="5" height="6.8" rx="2.3" fill="#5f6368"/><path d="M3 1.6Q4.5 -.2 6 1.6Z" fill="#5f6368"/><path d="M3.4 4.6H5.6M3.4 6.6H5.6" stroke="#d5d7da" stroke-width=".8"/><path d="M.6 3.4L2.4 4.6M8.4 3.4L6.6 4.6M.2 6H2M8.8 6H7M.6 8.8L2.4 7.4M8.4 8.8L6.6 7.4" stroke="#5f6368" stroke-width=".9"/></svg>
<span class="t" id="t60" style="left:39px;top:482px;font-size:8.35px;line-height:10.9px;color:#363a40;font-family:'Liberation Sans','Noto Sans CJK SC',sans-serif;transform:scaleX(0.9960);">No verbose</span>
<span class="t" style="left:141.5px;top:396.5px;font-size:8px;line-height:11px;color:#7f8790;font-family:'Liberation Mono','Noto Sans CJK SC',monospace;">&gt;</span>
<span class="t" id="t61" style="left:152.5px;top:398px;font-size:8.25px;line-height:10.7px;color:#303942;font-family:'Liberation Mono','Noto Sans CJK SC',monospace;transform:scaleX(0.9999);">ws = <span style="color:#aa0d91">new</span> WebSocket(<span style="color:#c41a16">'ws://127.0.0.1:2345'</span>)</span>
<div style="left:137px;top:409.3px;width:466px;height:1px;background:#f0f0f0;"></div>
<span class="t" style="left:140.8px;top:410.5px;font-size:8px;line-height:11px;color:#b5b9be;font-family:'Liberation Mono','Noto Sans CJK SC',monospace;">&lt;·</span>
<svg style="left:154.3px;top:413.6px;" width="4.4" height="5" viewBox="0 0 4.4 5"><path d="M.3 .3L4.1 2.5L.3 4.7Z" fill="#4a4f55"/></svg>
<span class="t" id="t62" style="left:160px;top:412px;font-size:8.25px;line-height:10.7px;color:#303942;font-family:'Liberation Mono','Noto Sans CJK SC',monospace;font-style:italic;transform:scaleX(0.9986);">WebSocket {url: <span style="color:#c41a16">'ws://127.0.0.1:2345/'</span>, <span style="color:#6b6f75">readyState</span>: <span style="color:#1c00cf">0</span>, <span style="color:#6b6f75">bufferedAmount</span>: <span style="color:#1c00cf">0</span>, …}</span>
<span class="t" style="left:141.5px;top:423.5px;font-size:8px;line-height:11px;color:#a9c0ea;font-family:'Liberation Mono','Noto Sans CJK SC',monospace;">&gt;</span>
<div style="left:152.4px;top:424px;width:1px;height:10.5px;background:#333;"></div>
<div style="left:432px;top:86.5px;width:680px;height:378.5px;background:#212121;border-radius:3px 0 0 1px;box-shadow:0 0 7px 2px rgba(66,116,236,.47);"></div>
<div style="left:433px;top:82.6px;width:680px;height:10px;background:linear-gradient(#27406f,#16213c 30%,#181d2b 55%,#212121);filter:blur(.6px);"></div>
<div style="left:442px;top:95.5px;width:581.5px;height:26.5px;background:#232323;border:1px solid #2f2f2f;border-bottom-color:#4c4c4c;box-sizing:border-box;border-radius:3px;"></div>
<div style="left:513px;top:99px;width:1px;height:19px;background:#3a3a3a;"></div>
<span class="t" id="t63" style="left:449px;top:103px;font-size:8.4px;line-height:10.9px;color:#35c77d;font-family:'Liberation Sans','Noto Sans CJK SC',sans-serif;font-weight:700;transform:scaleX(0.9408);">GET</span>
<svg style="left:496.5px;top:105.5px;" width="8" height="6" viewBox="0 0 8 6"><path d="M1 1.2L4 4.4L7 1.2" fill="none" stroke="#a8a8a8" stroke-width="1.1"/></svg>
<span class="t" id="t64" style="left:524px;top:103px;font-size:8.4px;line-height:10.9px;color:#ececec;font-family:'Liberation Sans','Noto Sans CJK SC',sans-serif;transform:scaleX(0.9938);">http://127.0.0.1:2346/push/msg?content=工资发放通知</span>
<div style="left:1028.5px;top:95.5px;width:66px;height:26px;background:#0f7bf0;border-radius:3px;"></div>
<span class="t" id="t65" style="left:1039.5px;top:103px;font-size:9px;line-height:11.7px;color:#ffffff;font-family:'Liberation Sans','Noto Sans CJK SC',sans-serif;font-weight:700;transform:scaleX(0.9993);">Send</span>
<svg style="left:1079px;top:105.8px;" width="8" height="6" viewBox="0 0 8 6"><path d="M1 1.2L4 4.4L7 1.2" fill="none" stroke="#cfe3fb" stroke-width="1.1"/></svg>
<span class="t" id="t66" style="left:442px;top:132px;font-size:8.4px;line-height:10.9px;color:#e6e6e6;font-family:'Liberation Sans','Noto Sans CJK SC',sans-serif;font-weight:700;transform:scaleX(0.9251);">Params</span>
<div style="left:473.2px;top:135.4px;width:4px;height:4px;background:#2fbf52;border-radius:50%;"></div>
<div style="left:442px;top:147px;width:35px;height:1.3px;background:#ff6c37;"></div>
<span class="t" id="t67" style="left:493px;top:132px;font-size:8.4px;line-height:10.9px;color:#999999;font-family:'Liberation Sans','Noto Sans CJK SC',sans-serif;transform:scaleX(1.0227);">Authorization</span>
<span class="t" id="t68" style="left:622px;top:132px;font-size:8.4px;line-height:10.9px;color:#999999;font-family:'Liberation Sans','Noto Sans CJK SC',sans-serif;transform:scaleX(0.9951);">Body</span>
<span class="t" id="t69" style="left:657px;top:132px;font-size:8.4px;line-height:10.9px;color:#999999;font-family:'Liberation Sans','Noto Sans CJK SC',sans-serif;transform:scaleX(1.0222);">Pre-request Script</span>
<span class="t" id="t70" style="left:742px;top:132px;font-size:8.4px;line-height:10.9px;color:#999999;font-family:'Liberation Sans','Noto Sans CJK SC',sans-serif;transform:scaleX(1.0232);">Tests</span>
<span class="t" id="t71" style="left:778px;top:132px;font-size:8.4px;line-height:10.9px;color:#999999;font-family:'Liberation Sans','Noto Sans CJK SC',sans-serif;transform:scaleX(0.9912);">Settings</span>
<span class="t" id="t72" style="left:558px;top:132px;font-size:8.4px;line-height:10.9px;color:#999999;font-family:'Liberation Sans','Noto Sans CJK SC',sans-serif;transform:scaleX(1.0173);">Headers <span style="color:#2fbf71">(6)</span></span>
<span class="t" id="t73" style="left:1056px;top:132px;font-size:8.4px;line-height:10.9px;color:#3f8ff0;font-family:'Liberation Sans','Noto Sans CJK SC',sans-serif;font-weight:700;transform:scaleX(0.9388);">Cookies</span>
<span class="t" id="t74" style="left:442px;top:153px;font-size:8.4px;line-height:10.9px;color:#bdbdbd;font-family:'Liberation Sans','Noto Sans CJK SC',sans-serif;font-weight:700;transform:scaleX(0.9505);">Query Params</span>
<div style="left:442px;top:170px;width:646px;height:1px;background:#262626;"></div>
<div style="left:442px;top:191.5px;width:646px;height:1px;background:#262626;"></div>
<div style="left:442px;top:213px;width:646px;height:1px;background:#262626;"></div>
<div style="left:442px;top:234.5px;width:646px;height:1px;background:#262626;"></div>
<div style="left:442px;top:170px;width:1px;height:65px;background:#262626;"></div>
<div style="left:1088px;top:170px;width:1px;height:65px;background:#262626;"></div>
<div style="left:781px;top:170px;width:1px;height:65px;background:#262626;"></div>
<div style="left:1041px;top:170px;width:1px;height:22px;background:#262626;"></div>
<span class="t" id="t75" style="left:477.5px;top:175px;font-size:8.4px;line-height:10.9px;color:#cfcfcf;font-family:'Liberation Sans','Noto Sans CJK SC',sans-serif;font-weight:700;transform:scaleX(0.9431);">Key</span>
<span class="t" id="t76" style="left:786px;top:175px;font-size:8.4px;line-height:10.9px;color:#cfcfcf;font-family:'Liberation Sans','Noto Sans CJK SC',sans-serif;font-weight:700;transform:scaleX(0.8908);">Value</span>
<span class="t" id="t77" style="left:1048.5px;top:175px;font-size:8.4px;line-height:10.9px;color:#dedede;font-family:'Liberation Sans','Noto Sans CJK SC',sans-serif;font-weight:700;transform:scaleX(0.9092);">Bulk Edit</span>
<svg style="left:457.5px;top:196px;" width="12" height="12" viewBox="0 0 12 12"><rect x=".2" y=".2" width="11.6" height="11.6" rx="2.2" fill="#f3f3f3"/><path d="M2.6 6.1L5 8.5L9.5 3.5" fill="none" stroke="#1e1e1e" stroke-width="1.9"/></svg>
<span class="t" id="t78" style="left:478.5px;top:197px;font-size:8.4px;line-height:10.9px;color:#e6e6e6;font-family:'Liberation Sans','Noto Sans CJK SC',sans-serif;transform:scaleX(1.0370);">content</span>
<span class="t" id="t79" style="left:786px;top:197px;font-size:8.4px;line-height:10.9px;color:#e6e6e6;font-family:'Liberation Sans','Noto Sans CJK SC',sans-serif;transform:scaleX(0.9652);">工资发放通知</span>
<span class="t" id="t80" style="left:478.5px;top:218px;font-size:8.4px;line-height:10.9px;color:#5c5c5c;font-family:'Liberation Sans','Noto Sans CJK SC',sans-serif;transform:scaleX(0.9004);">Key</span>
<span class="t" id="t81" style="left:786px;top:218px;font-size:8.4px;line-height:10.9px;color:#5c5c5c;font-family:'Liberation Sans','Noto Sans CJK SC',sans-serif;transform:scaleX(0.9369);">Value</span>
<div style="left:432px;top:349.5px;width:680px;height:1px;background:#262626;"></div>
<span class="t" id="t82" style="left:437px;top:355px;font-size:8.4px;line-height:10.9px;color:#e6e6e6;font-family:'Liberation Sans','Noto Sans CJK SC',sans-serif;font-weight:700;transform:scaleX(0.9075);">Body</span>
<div style="left:437px;top:370px;width:19px;height:1.3px;background:#ff6c37;"></div>
<span class="t" id="t83" style="left:467px;top:355px;font-size:8.4px;line-height:10.9px;color:#999999;font-family:'Liberation Sans','Noto Sans CJK SC',sans-serif;transform:scaleX(0.9912);">Cookies</span>
<span class="t" id="t84" style="left:507px;top:355px;font-size:8.4px;line-height:10.9px;color:#999999;font-family:'Liberation Sans','Noto Sans CJK SC',sans-serif;transform:scaleX(1.0173);">Headers <span style="color:#2fbf71">(4)</span></span>
<span class="t" id="t85" style="left:563px;top:355px;font-size:8.4px;line-height:10.9px;color:#999999;font-family:'Liberation Sans','Noto Sans CJK SC',sans-serif;transform:scaleX(0.9863);">Test Results</span>
<svg style="left:842.5px;top:354.6px;" width="11" height="11" viewBox="0 0 11 11"><circle cx="5.5" cy="5.5" r="4.6" fill="none" stroke="#b0b0b0" stroke-width="1.1"/><ellipse cx="5.5" cy="5.5" rx="1.9" ry="4.6" fill="none" stroke="#b0b0b0" stroke-width="1"/><path d="M1 4H10M1 7H10" stroke="#b0b0b0" stroke-width="1"/></svg>
<span class="t" id="t86" style="left:861px;top:356px;font-size:7.9px;line-height:10.3px;color:#999999;font-family:'Liberation Sans','Noto Sans CJK SC',sans-serif;transform:scaleX(0.9901);">Status: <span style="color:#3fc27f">200 OK</span></span>
<span class="t" id="t87" style="left:922px;top:356px;font-size:7.9px;line-height:10.3px;color:#999999;font-family:'Liberation Sans','Noto Sans CJK SC',sans-serif;transform:scaleX(0.9806);">Time: <span style="color:#3fc27f">6 ms</span></span>
<span class="t" id="t88" style="left:968px;top:356px;font-size:7.9px;line-height:10.3px;color:#999999;font-family:'Liberation Sans','Noto Sans CJK SC',sans-serif;transform:scaleX(0.9415);">Size: <span style="color:#3fc27f">155 B</span></span>
<div style="left:1013.5px;top:354.5px;width:1px;height:11px;background:#2e2e2e;"></div>
<span class="t" id="t89" style="left:1021px;top:355px;font-size:8.4px;line-height:10.9px;color:#3f8ff0;font-family:'Liberation Sans','Noto Sans CJK SC',sans-serif;transform:scaleX(0.9976);">Save Response</span>
<svg style="left:1084.5px;top:357.8px;" width="7" height="5.4" viewBox="0 0 7 5.4"><path d="M.9 1.1L3.5 3.9L6.1 1.1" fill="none" stroke="#3f8ff0" stroke-width="1"/></svg>
<div style="left:437px;top:376px;width:185.5px;height:19.5px;background:#282828;border-radius:3px;"></div>
<div style="left:437px;top:376px;width:44.5px;height:19.5px;background:#3a3a3a;border-radius:3px;"></div>
<span class="t" id="t90" style="left:448px;top:381px;font-size:8.4px;line-height:10.9px;color:#f0f0f0;font-family:'Liberation Sans','Noto Sans CJK SC',sans-serif;transform:scaleX(1.0286);">Pretty</span>
<span class="t" id="t91" style="left:491px;top:381px;font-size:8.4px;line-height:10.9px;color:#999999;font-family:'Liberation Sans','Noto Sans CJK SC',sans-serif;transform:scaleX(0.9543);">Raw</span>
<span class="t" id="t92" style="left:528px;top:381px;font-size:8.4px;line-height:10.9px;color:#999999;font-family:'Liberation Sans','Noto Sans CJK SC',sans-serif;transform:scaleX(1.0068);">Preview</span>
<span class="t" id="t93" style="left:579px;top:381px;font-size:8.4px;line-height:10.9px;color:#999999;font-family:'Liberation Sans','Noto Sans CJK SC',sans-serif;transform:scaleX(0.9888);">Visualize</span>
<div style="left:629px;top:376px;width:48.5px;height:19.5px;background:#2a2a2a;border-radius:3px;"></div>
<span class="t" id="t94" style="left:634.5px;top:382px;font-size:7.6px;line-height:9.9px;color:#e2e2e2;font-family:'Liberation Sans','Noto Sans CJK SC',sans-serif;font-weight:700;transform:scaleX(0.9426);">JSON</span>
<svg style="left:662.5px;top:384px;" width="7" height="5.4" viewBox="0 0 7 5.4"><path d="M.9 1.1L3.5 3.9L6.1 1.1" fill="none" stroke="#a8a8a8" stroke-width="1"/></svg>
<div style="left:683.8px;top:376px;width:20.8px;height:19.5px;background:#2a2a2a;border-radius:3px;"></div>
<svg style="left:688.6px;top:381.4px;" width="11.5" height="9.6" viewBox="0 0 11.5 9.6"><path d="M.4 1H10.6M.4 4.4H8.6Q10.8 4.4 10.8 6.2Q10.8 8 8.6 8H6.4M.4 8H4" fill="none" stroke="#ff6c37" stroke-width="1.2"/><path d="M7.4 6.3L5.4 8L7.4 9.6Z" fill="#ff6c37"/></svg>
<svg style="left:1062.5px;top:380px;" width="11.5" height="12" viewBox="0 0 11.5 12"><rect x=".6" y=".6" width="7.6" height="8.2" rx="1" fill="#8f8f8f"/><rect x="2.8" y="2.6" width="8" height="8.6" rx="1" fill="#cfcfcf" stroke="#212121" stroke-width=".8"/></svg>
<svg style="left:1079px;top:381px;" width="11" height="11" viewBox="0 0 11 11"><circle cx="4.4" cy="4.4" r="3.2" fill="none" stroke="#c8c8c8" stroke-width="1.5"/><path d="M6.8 6.8L10 10" stroke="#c8c8c8" stroke-width="1.7" stroke-linecap="round"/></svg>
<div style="left:1088.3px;top:403.5px;width:2.6px;height:11.5px;background:#d0d0d0;"></div>
<div style="left:1088.3px;top:439px;width:2.6px;height:12px;background:#d0d0d0;"></div>
<span class="t" id="t95" style="left:455.4px;top:406px;font-size:7.7px;line-height:10.0px;color:#7d7d7d;font-family:'Liberation Mono','Noto Sans CJK SC',monospace;">1</span>
<span class="t" id="t96" style="left:455.4px;top:418px;font-size:7.7px;line-height:10.0px;color:#7d7d7d;font-family:'Liberation Mono','Noto Sans CJK SC',monospace;">2</span>
<span class="t" id="t97" style="left:455.4px;top:430px;font-size:7.7px;line-height:10.0px;color:#7d7d7d;font-family:'Liberation Mono','Noto Sans CJK SC',monospace;">3</span>
<span class="t" id="t98" style="left:455.4px;top:441px;font-size:7.7px;line-height:10.0px;color:#7d7d7d;font-family:'Liberation Mono','Noto Sans CJK SC',monospace;">4</span>
<div style="left:474.8px;top:405.4px;width:3.2px;height:9.4px;background:#3a3a3a;outline:.6px solid #8f8f8f;"></div>
<div style="left:474.8px;top:441.2px;width:3.2px;height:9.4px;background:#3a3a3a;outline:.6px solid #8f8f8f;"></div>
<span class="t" id="t99" style="left:474.1px;top:406px;font-size:7.7px;line-height:10.0px;color:#d8d8d8;font-family:'Liberation Mono','Noto Sans CJK SC',monospace;">{</span>
<span class="t" id="t100" style="left:474.1px;top:441px;font-size:7.7px;line-height:10.0px;color:#d8d8d8;font-family:'Liberation Mono','Noto Sans CJK SC',monospace;">}</span>
<div style="left:476px;top:416px;width:0.8px;height:24px;background:#303030;"></div>
<span class="t" id="t101" style="left:493.7px;top:418px;font-size:7.7px;line-height:10.0px;color:#d0d0d0;font-family:'Liberation Mono','Noto Sans CJK SC',monospace;transform:scaleX(1.0028);"><span style="color:#a9c8ee">"code"</span>: <span style="color:#c9b8e8">0</span>,</span>
<span class="t" id="t102" style="left:493.7px;top:430px;font-size:7.7px;line-height:10.0px;color:#d0d0d0;font-family:'Liberation Mono','Noto Sans CJK SC',monospace;transform:scaleX(1.0062);"><span style="color:#a9c8ee">"msg"</span>: <span style="color:#dba98c">"success"</span></span>
<div style="left:-2px;top:44.5px;width:176.2px;height:16.5px;background:transparent;border:2px solid #dc222c;box-sizing:border-box;"></div>
<div style="left:319.6px;top:44px;width:173.39999999999998px;height:17px;background:transparent;border:2px solid #dc222c;box-sizing:border-box;"></div>
<div style="left:439.8px;top:93px;width:651.2px;height:37px;background:transparent;border:2.2px solid #dc222c;box-sizing:border-box;"></div>
<div style="left:132.9px;top:310.6px;width:239.4px;height:120.79999999999995px;background:transparent;border:1.9px solid #dc222c;box-sizing:border-box;"></div>
<span class="t" id="t103" style="left:50px;top:78px;font-size:16px;line-height:20.8px;color:#ee2a30;font-family:'Liberation Sans','Noto Sans CJK SC',sans-serif;font-weight:700;text-shadow:-.8px 0 #ffe9e9,.8px 0 #ffe9e9,0 -.8px #ffe9e9,0 .8px #ffe9e9,-.6px -.6px #ffe9e9,.6px .6px #ffe9e9,-.6px .6px #ffe9e9,.6px -.6px #ffe9e9;transform:scaleX(0.9998);">命令行终端</span>
<span class="t" id="t104" style="left:335px;top:85px;font-size:16px;line-height:20.8px;color:#ee2a30;font-family:'Liberation Sans','Noto Sans CJK SC',sans-serif;font-weight:700;text-shadow:-.8px 0 #ffe9e9,.8px 0 #ffe9e9,0 -.8px #ffe9e9,0 .8px #ffe9e9,-.6px -.6px #ffe9e9,.6px .6px #ffe9e9,-.6px .6px #ffe9e9,.6px -.6px #ffe9e9;transform:scaleX(1.0123);">命令行终端</span>
<span class="t" id="t105" style="left:854.5px;top:139px;font-size:17.6px;line-height:22.9px;color:#ee2a30;font-family:'Liberation Sans','Noto Sans CJK SC',sans-serif;font-weight:700;text-shadow:-.8px 0 #ffe9e9,.8px 0 #ffe9e9,0 -.8px #ffe9e9,0 .8px #ffe9e9,-.6px -.6px #ffe9e9,.6px .6px #ffe9e9,-.6px .6px #ffe9e9,.6px -.6px #ffe9e9;transform:scaleX(0.8882);">HTTP</span>
<span class="t" id="t106" style="left:899.6px;top:142px;font-size:16px;line-height:20.8px;color:#ee2a30;font-family:'Liberation Sans','Noto Sans CJK SC',sans-serif;font-weight:700;text-shadow:-.8px 0 #ffe9e9,.8px 0 #ffe9e9,0 -.8px #ffe9e9,0 .8px #ffe9e9,-.6px -.6px #ffe9e9,.6px .6px #ffe9e9,-.6px .6px #ffe9e9,.6px -.6px #ffe9e9;transform:scaleX(1.0060);">接口触发</span>
<span class="t" id="t107" style="left:204px;top:288px;font-size:16px;line-height:20.8px;color:#e6262c;font-family:'Liberation Sans','Noto Sans CJK SC',sans-serif;-webkit-text-stroke:.3px #e6262c;transform:scaleX(1.0050);">浏览器客户端</span>
</div></body></html>
